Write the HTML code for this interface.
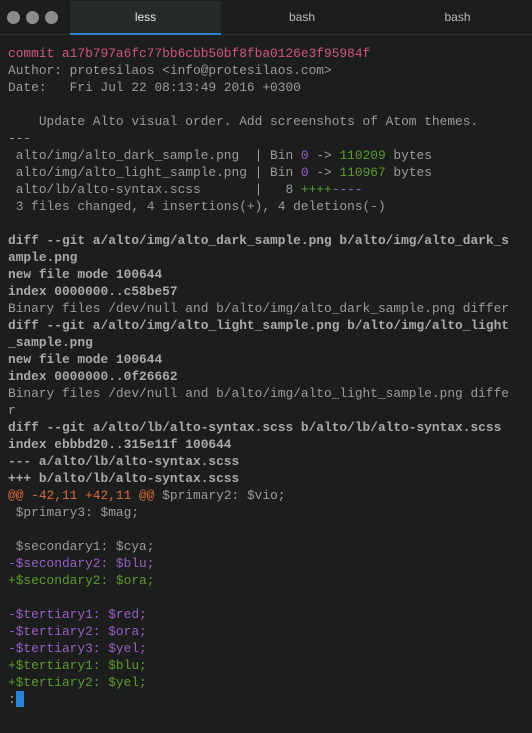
<!DOCTYPE html>
<html><head><style>
body{margin:0;width:532px;height:733px;background:#1b1e1c;overflow:hidden;font-family:"Liberation Mono",monospace;}
.bar{position:absolute;left:0;top:0;width:532px;height:34px;border-bottom:1px solid #2c302e;background:#1b1e1c}
.dot{position:absolute;top:11px;width:13px;height:13px;border-radius:50%;background:#8c8b8e}
.tab{position:absolute;top:1px;height:33px;line-height:33px;text-align:center;font-family:"Liberation Sans",sans-serif;font-size:12px;color:#b8bab9}
.act{background:#262a28;border-bottom:2px solid #2a83d0;height:32px;color:#e8e8e8}
pre{position:absolute;left:8px;top:45px;margin:0;font-size:12.85px;line-height:17px;color:#9b9d9c;font-family:"Liberation Mono",monospace}
.c{color:#d3577f}.p{color:#9a5ec8}.g{color:#5f9a2f}.o{color:#e0683a}b{color:#a9abaa}
.cur{display:inline-block;width:8px;height:16px;background:#2a83d0;vertical-align:-4px}
</style></head><body>
<div class="bar">
<div class="dot" style="left:7px"></div><div class="dot" style="left:26px"></div><div class="dot" style="left:45px"></div>
<div class="tab act" style="left:70px;width:151px">less</div>
<div class="tab" style="left:221px;width:162px">bash</div>
<div class="tab" style="left:383px;width:149px">bash</div>
</div>
<pre><span class="c">commit a17b797a6fc77bb6cbb50bf8fba0126e3f95984f</span>
Author: protesilaos &lt;info@protesilaos.com&gt;
Date:   Fri Jul 22 08:13:49 2016 +0300

    Update Alto visual order. Add screenshots of Atom themes.
---
 alto/img/alto_dark_sample.png  | Bin <span class="p">0</span> -&gt; <span class="g">110209</span> bytes
 alto/img/alto_light_sample.png | Bin <span class="p">0</span> -&gt; <span class="g">110967</span> bytes
 alto/lb/alto-syntax.scss       |   8 <span class="g">++++</span><span class="p">----</span>
 3 files changed, 4 insertions(+), 4 deletions(-)

<b>diff --git a/alto/img/alto_dark_sample.png b/alto/img/alto_dark_s
ample.png
new file mode 100644
index 0000000..c58be57</b>
Binary files /dev/null and b/alto/img/alto_dark_sample.png differ
<b>diff --git a/alto/img/alto_light_sample.png b/alto/img/alto_light
_sample.png
new file mode 100644
index 0000000..0f26662</b>
Binary files /dev/null and b/alto/img/alto_light_sample.png diffe
r
<b>diff --git a/alto/lb/alto-syntax.scss b/alto/lb/alto-syntax.scss
index ebbbd20..315e11f 100644
--- a/alto/lb/alto-syntax.scss
+++ b/alto/lb/alto-syntax.scss</b>
<span class="o">@@ -42,11 +42,11 @@</span> $primary2: $vio;
 $primary3: $mag;

 $secondary1: $cya;
<span class="p">-$secondary2: $blu;</span>
<span class="g">+$secondary2: $ora;</span>

<span class="p">-$tertiary1: $red;</span>
<span class="p">-$tertiary2: $ora;</span>
<span class="p">-$tertiary3: $yel;</span>
<span class="g">+$tertiary1: $blu;</span>
<span class="g">+$tertiary2: $yel;</span>
:<span class="cur"></span></pre>
</body></html>
